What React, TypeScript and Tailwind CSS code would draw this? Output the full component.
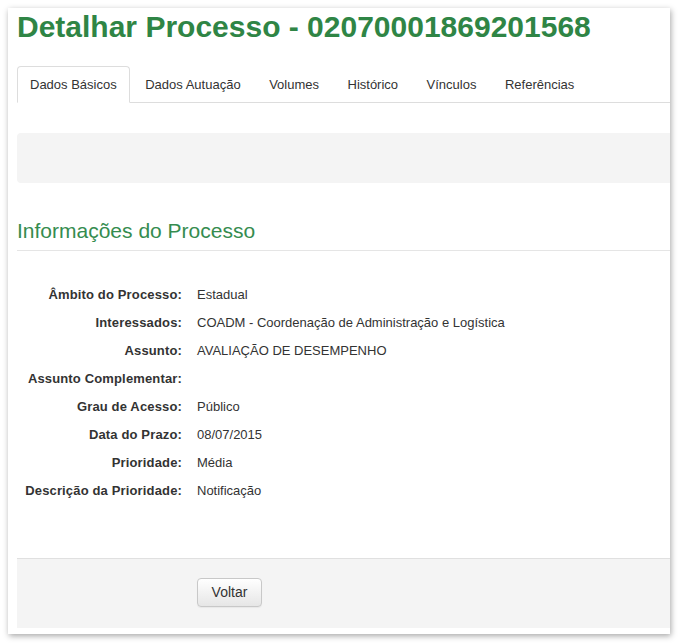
import React from "react";

const rows: [string, string][] = [
  ["Âmbito do Processo:", "Estadual"],
  ["Interessados:", "COADM - Coordenação de Administração e Logística"],
  ["Assunto:", "AVALIAÇÃO DE DESEMPENHO"],
  ["Assunto Complementar:", ""],
  ["Grau de Acesso:", "Público"],
  ["Data do Prazo:", "08/07/2015"],
  ["Prioridade:", "Média"],
  ["Descrição da Prioridade:", "Notificação"],
];

const tabs = ["Dados Básicos", "Dados Autuação", "Volumes", "Histórico", "Vínculos", "Referências"];

export default function App() {
  return (
    <div className="w-[678px] h-[643px] bg-white overflow-hidden" style={{ fontFamily: '"Liberation Sans", Arial, sans-serif' }}>
      <div className="ml-[8px] mt-[8px] w-[662px] h-[626px] bg-white shadow-[1px_2px_6px_rgba(0,0,0,0.35)] overflow-hidden pl-[9px]">
        <h1 className="text-[30px] leading-[36px] font-bold text-[#2f8545] whitespace-nowrap pt-[1px]">
          Detalhar Processo - 02070001869201568
        </h1>

        <div className="mt-[21px] flex gap-[2.5px] border-b border-[#dddddd] h-[37px]">
          {tabs.map((t, i) => (
            <div
              key={t}
              className={
                "h-[37px] -mb-px px-[12px] flex items-center text-[13px] text-[#333333] rounded-t-[4px] border " +
                (i === 0 ? "border-[#dddddd] border-b-white bg-white" : "border-transparent")
              }
            >
              {t}
            </div>
          ))}
        </div>

        <div className="mt-[30px] h-[50px] bg-[#f4f4f4] rounded-l-[4px]"></div>

        <div className="mt-[33px] pb-[4px] border-b border-[#e5e5e5]">
          <h2 className="text-[21px] leading-[30px] text-[#358c4f]">Informações do Processo</h2>
        </div>

        <div className="mt-[30px] flex flex-col">
          {rows.map(([l, v]) => (
            <div key={l} className="h-[28px] flex items-center text-[13px] text-[#333333]">
              <div className="w-[165px] text-right font-bold whitespace-nowrap tracking-[0.15px]">{l}</div>
              <div className="ml-[15px] whitespace-nowrap">{v}</div>
            </div>
          ))}
        </div>

        <div className="mt-[53px] h-[70px] bg-[#f4f4f4] border-t border-[#e0e0e0] pl-[180px] pt-[19px]">
          <button className="h-[29px] w-[65px] rounded-[4px] border border-[#c8c8c8] bg-gradient-to-b from-white to-[#e6e6e6] text-[14px] text-[#333333] shadow-[0_1px_1px_rgba(0,0,0,0.05)]">
            Voltar
          </button>
        </div>
      </div>
    </div>
  );
}
